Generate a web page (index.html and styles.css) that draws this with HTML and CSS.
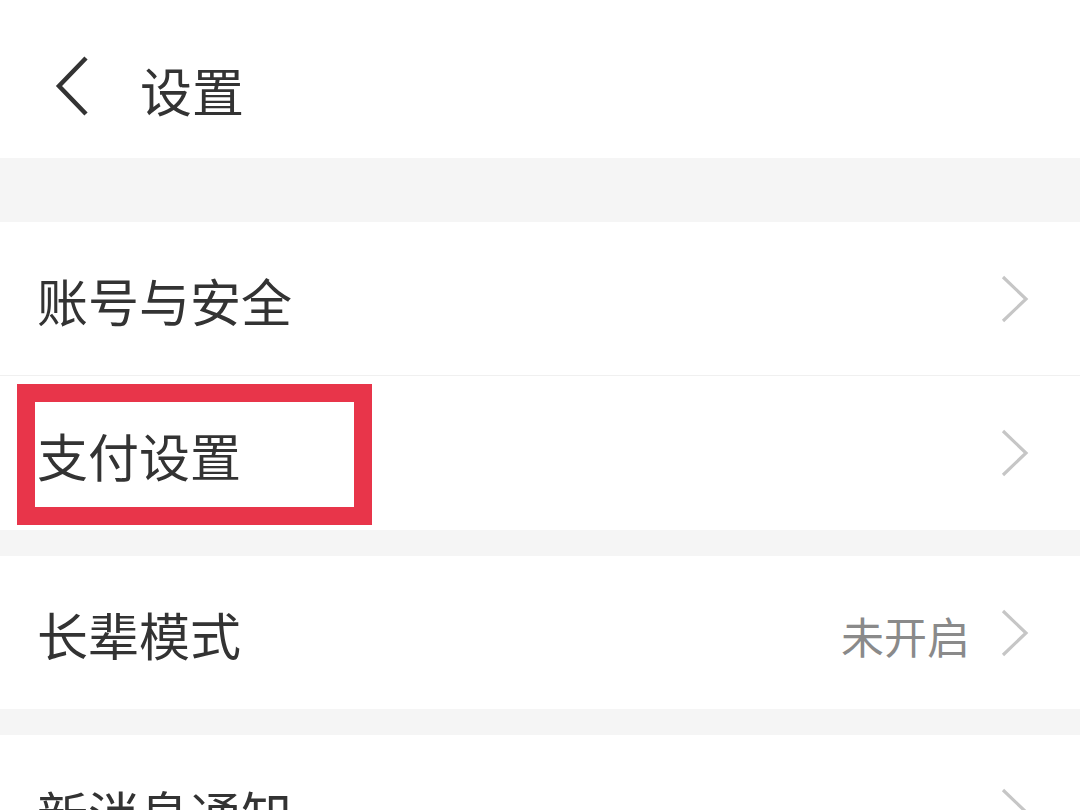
FILE: index.html
```html
<!DOCTYPE html>
<html lang="zh-CN">
<head>
<meta charset="utf-8">
<title>设置</title>
<link rel="stylesheet" href="styles.css">
</head>
<body>
<div class="page">
  <header class="header">
    <svg class="back" width="36" height="60" viewBox="0 0 36 60"><path d="M32 2 L5 30 L32 58" fill="none" stroke="#333" stroke-width="4.5" stroke-linecap="butt" stroke-linejoin="miter"/></svg>
    <h1 class="title">设置</h1>
  </header>
  <div class="band band-top"></div>
  <div class="group">
    <div class="row">
      <span class="label">账号与安全</span>
      <span class="right"><svg class="arrow" width="30" height="50" viewBox="0 0 30 50"><path d="M3 3 L26 25 L3 47" fill="none" stroke="#c6c6c6" stroke-width="3.2"/></svg></span>
    </div>
    <div class="divider"></div>
    <div class="row row-pay">
      <span class="label">支付设置</span>
      <span class="right"><svg class="arrow" width="30" height="50" viewBox="0 0 30 50"><path d="M3 3 L26 25 L3 47" fill="none" stroke="#c6c6c6" stroke-width="3.2"/></svg></span>
      <div class="highlight"></div>
    </div>
  </div>
  <div class="band"></div>
  <div class="group">
    <div class="row">
      <span class="label">长辈模式</span>
      <span class="right"><span class="value">未开启</span><svg class="arrow" width="30" height="50" viewBox="0 0 30 50"><path d="M3 3 L26 25 L3 47" fill="none" stroke="#c6c6c6" stroke-width="3.2"/></svg></span>
    </div>
  </div>
  <div class="band"></div>
  <div class="group">
    <div class="row">
      <span class="label">新消息通知</span>
      <span class="right"><svg class="arrow" width="30" height="50" viewBox="0 0 30 50"><path d="M3 3 L26 25 L3 47" fill="none" stroke="#c6c6c6" stroke-width="3.2"/></svg></span>
    </div>
  </div>
</div>
</body>
</html>
```
FILE: styles.css
```css
html, body {
  margin: 0;
  padding: 0;
  background: #ffffff;
}
body {
  font-family: "Noto Sans CJK SC", "Noto Sans", sans-serif;
  color: #333333;
  width: 1080px;
  height: 810px;
  overflow: hidden;
}
.page {
  display: flex;
  flex-direction: column;
}
.header {
  height: 158px;
  display: flex;
  align-items: center;
  padding-left: 54px;
  padding-top: 18px;
  box-sizing: border-box;
  background: #fff;
}
.back {
  display: block;
  margin-top: -4px;
}
.title {
  margin: 0 0 0 50px;
  font-size: 52px;
  font-weight: 400;
  line-height: 1;
  color: #333;
  margin-top: 4px;
}
.band {
  height: 26px;
  background: #f5f5f5;
}
.band-top {
  height: 64px;
}
.group {
  background: #fff;
}
.row {
  position: relative;
  height: 153px;
  display: flex;
  align-items: center;
  justify-content: space-between;
  padding: 0 50px 0 37px;
}
.row-pay {
  height: 154px;
}
.label {
  font-size: 51px;
  line-height: 1;
  color: #333;
  margin-top: 4px;
}
.right {
  display: flex;
  align-items: center;
  gap: 30px;
}
.value {
  font-size: 43px;
  line-height: 1;
  color: #8a8a8a;
  margin-top: 6px;
}
.arrow {
  display: block;
}
.divider {
  height: 1px;
  background: #f0f0f0;
}
.highlight {
  position: absolute;
  left: 17px;
  top: 8px;
  width: 355px;
  height: 141px;
  box-sizing: border-box;
  border: 18px solid #e8354a;
}
```
